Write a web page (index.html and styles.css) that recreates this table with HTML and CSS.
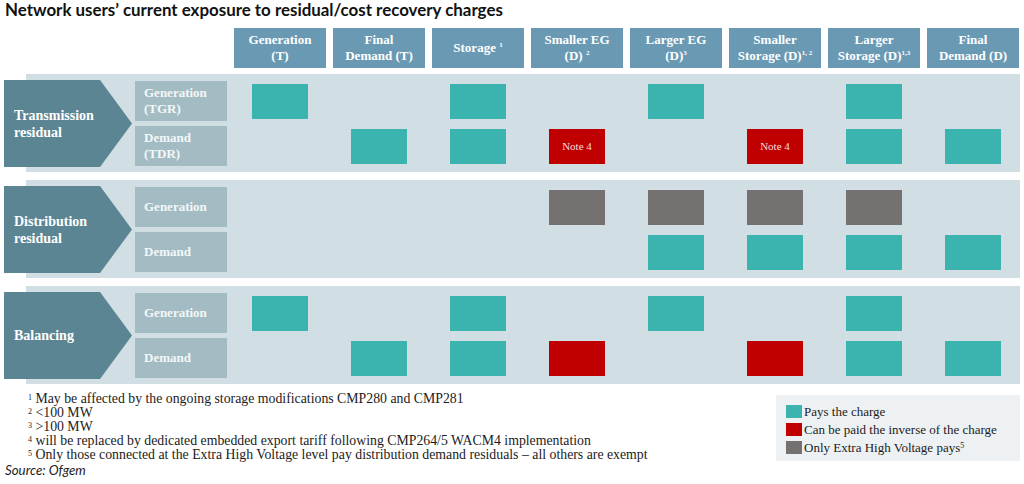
FILE: index.html
```html
<!DOCTYPE html>
<html>
<head>
<meta charset="utf-8">
<link rel="stylesheet" href="styles.css">
</head>
<body>
<div class="page">
  <div class="title">Network users’ current exposure to residual/cost recovery charges</div>
  <div class="header">
    <div class="hcell"><span>Generation<br>(T)</span></div>
    <div class="hcell"><span>Final<br>Demand (T)</span></div>
    <div class="hcell"><span>Storage <sup>1</sup></span></div>
    <div class="hcell"><span>Smaller EG<br>(D) <sup>2</sup></span></div>
    <div class="hcell"><span>Larger EG<br>(D)<sup>3</sup></span></div>
    <div class="hcell"><span>Smaller<br>Storage (D)<sup>1, 2</sup></span></div>
    <div class="hcell"><span>Larger<br>Storage (D)<sup>1,3</sup></span></div>
    <div class="hcell"><span>Final<br>Demand (D)</span></div>
  </div>

  <div class="band">
    <div class="chevron"><span>Transmission<br>residual</span></div>
    <div class="grid">
      <div class="lab"><span>Generation<br>(TGR)</span></div>
      <div class="cell"><div class="box teal"></div></div>
      <div class="cell"></div>
      <div class="cell"><div class="box teal"></div></div>
      <div class="cell"></div>
      <div class="cell"><div class="box teal"></div></div>
      <div class="cell"></div>
      <div class="cell"><div class="box teal"></div></div>
      <div class="cell"></div>
      <div class="lab"><span>Demand<br>(TDR)</span></div>
      <div class="cell"></div>
      <div class="cell"><div class="box teal"></div></div>
      <div class="cell"><div class="box teal"></div></div>
      <div class="cell"><div class="box red">Note 4</div></div>
      <div class="cell"></div>
      <div class="cell"><div class="box red">Note 4</div></div>
      <div class="cell"><div class="box teal"></div></div>
      <div class="cell"><div class="box teal"></div></div>
    </div>
  </div>

  <div class="band">
    <div class="chevron"><span>Distribution<br>residual</span></div>
    <div class="grid">
      <div class="lab">Generation</div>
      <div class="cell"></div>
      <div class="cell"></div>
      <div class="cell"></div>
      <div class="cell"><div class="box grey"></div></div>
      <div class="cell"><div class="box grey"></div></div>
      <div class="cell"><div class="box grey"></div></div>
      <div class="cell"><div class="box grey"></div></div>
      <div class="cell"></div>
      <div class="lab">Demand</div>
      <div class="cell"></div>
      <div class="cell"></div>
      <div class="cell"></div>
      <div class="cell"></div>
      <div class="cell"><div class="box teal"></div></div>
      <div class="cell"><div class="box teal"></div></div>
      <div class="cell"><div class="box teal"></div></div>
      <div class="cell"><div class="box teal"></div></div>
    </div>
  </div>

  <div class="band">
    <div class="chevron">Balancing</div>
    <div class="grid">
      <div class="lab">Generation</div>
      <div class="cell"><div class="box teal"></div></div>
      <div class="cell"></div>
      <div class="cell"><div class="box teal"></div></div>
      <div class="cell"></div>
      <div class="cell"><div class="box teal"></div></div>
      <div class="cell"></div>
      <div class="cell"><div class="box teal"></div></div>
      <div class="cell"></div>
      <div class="lab">Demand</div>
      <div class="cell"></div>
      <div class="cell"><div class="box teal"></div></div>
      <div class="cell"><div class="box teal"></div></div>
      <div class="cell"><div class="box red"></div></div>
      <div class="cell"></div>
      <div class="cell"><div class="box red"></div></div>
      <div class="cell"><div class="box teal"></div></div>
      <div class="cell"><div class="box teal"></div></div>
    </div>
  </div>

  <div class="footer">
    <div class="notes">
      <div class="note"><sup>1</sup> May be affected by the ongoing storage modifications CMP280 and CMP281</div>
      <div class="note"><sup>2</sup> &lt;100 MW</div>
      <div class="note"><sup>3</sup> &gt;100 MW</div>
      <div class="note"><sup>4</sup> will be replaced by dedicated embedded export tariff following CMP264/5 WACM4 implementation</div>
      <div class="note"><sup>5</sup> Only those connected at the Extra High Voltage level pay distribution demand residuals – all others are exempt</div>
      <div class="source">Source: Ofgem</div>
    </div>
    <div class="legend">
      <div class="lrow"><span class="sq teal"></span><span>Pays the charge</span></div>
      <div class="lrow"><span class="sq red"></span><span>Can be paid the inverse of the charge</span></div>
      <div class="lrow"><span class="sq grey"></span><span>Only Extra High Voltage pays<sup>5</sup></span></div>
    </div>
  </div>
</div>
</body>
</html>
```
FILE: styles.css
```css
html, body {
  margin: 0;
  padding: 0;
  background: #ffffff;
}
body {
  width: 1024px;
  height: 484px;
  overflow: hidden;
  font-family: "Liberation Serif", serif;
  color: #1c1c1c;
}
.page {
  width: 1024px;
}
.title {
  font-family: Lato, "Liberation Sans", sans-serif;
  font-weight: 700;
  font-size: 16.9px;
  line-height: 20px;
  height: 28px;
  padding-left: 5px;
  color: #111;
}
.header {
  display: grid;
  grid-template-columns: repeat(8, 92px);
  column-gap: 7px;
  margin-left: 234px;
  height: 40px;
  margin-bottom: 6px;
}
.hcell {
  background: #6a99b3;
  color: #ffffff;
  font-weight: 700;
  font-size: 13px;
  line-height: 16px;
  display: flex;
  align-items: center;
  justify-content: center;
  text-align: center;
}
sup {
  font-size: 7px;
  line-height: 0;
  vertical-align: 5px;
}
.band {
  display: flex;
  margin-left: 26px;
  width: 994px;
  height: 98px;
  background: #d1dfe4;
  margin-bottom: 8px;
}
.chevron {
  box-sizing: border-box;
  width: 128px;
  height: 87px;
  margin: 6px 0 0 -22px;
  padding-left: 10px;
  background: #5b8592;
  color: #ffffff;
  font-weight: 700;
  font-size: 14px;
  line-height: 17px;
  display: flex;
  align-items: center;
  clip-path: polygon(0 0, 96px 0, 128px 50%, 96px 100%, 0 100%);
}
.grid {
  display: grid;
  grid-template-columns: repeat(9, 92px);
  grid-template-rows: 40px 40px;
  column-gap: 7px;
  row-gap: 5px;
  margin-left: 3px;
  padding-top: 7px;
}
.lab {
  background: #a3bcc4;
  color: #f3f7f8;
  font-weight: 700;
  font-size: 13px;
  line-height: 16px;
  padding-left: 9px;
  display: flex;
  align-items: center;
}
.cell {
  display: flex;
  align-items: center;
  justify-content: center;
}
.box {
  width: 56px;
  height: 35px;
  display: flex;
  align-items: center;
  justify-content: center;
  font-size: 11px;
  color: #f7dcdc;
}
.teal { background: #3bb3af; }
.red { background: #c00000; }
.grey { background: #767171; }
.footer {
  display: flex;
  justify-content: space-between;
  margin-top: 0;
}
.notes {
  font-size: 13.8px;
  line-height: 14px;
}
.note {
  margin-left: 28px;
}
.note sup {
  font-size: 8px;
  vertical-align: 3px;
}
.source {
  font-family: Lato, "Liberation Sans", sans-serif;
  font-style: italic;
  font-size: 13.3px;
  line-height: 16px;
  padding-left: 5px;
  color: #222;
}
.legend {
  box-sizing: border-box;
  width: 244px;
  height: 66px;
  margin: 3px 4px 0 0;
  padding: 7px 0 0 10px;
  background: #edf1f3;
  font-size: 13px;
}
.lrow {
  display: flex;
  align-items: center;
  height: 18px;
  line-height: 13px;
}
.sq {
  width: 16px;
  height: 13px;
  margin-right: 2px;
  flex: none;
}
.lrow sup {
  font-size: 8px;
  vertical-align: 4px;
}
```
